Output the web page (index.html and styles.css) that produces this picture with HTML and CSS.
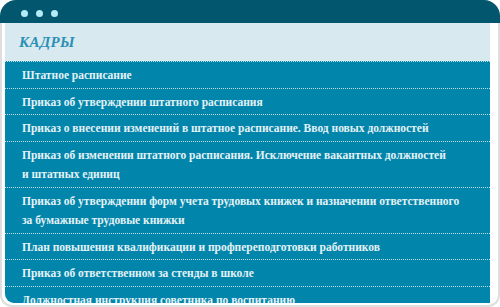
FILE: index.html
```html
<!DOCTYPE html>
<html lang="ru">
  <head>
    <meta charset="UTF-8" />
    <meta name="viewport" content="width=device-width, initial-scale=1" />
    <title>Кадры</title>
    <link rel="stylesheet" href="styles.css">
  </head>
  <body>
    <div class="window">
      <div class="titlebar">
        <span class="dot"></span>
        <span class="dot"></span>
        <span class="dot"></span>
      </div>
      <div class="frame">
        <section class="panel">
          <h2>КАДРЫ</h2>
          <ul class="docs">
            <li><a href="#">Штатное расписание</a></li>
            <li><a href="#">Приказ об утверждении штатного расписания</a></li>
            <li><a href="#">Приказ о внесении изменений в штатное расписание. Ввод новых должностей</a></li>
            <li><a href="#">Приказ об изменении штатного расписания. Исключение вакантных должностей<br>и штатных единиц</a></li>
            <li><a href="#">Приказ об утверждении форм учета трудовых книжек и назначении ответственного<br>за бумажные трудовые книжки</a></li>
            <li><a href="#">План повышения квалификации и профпереподготовки работников</a></li>
            <li><a href="#">Приказ об ответственном за стенды в школе</a></li>
            <li><a href="#">Должностная инструкция советника по воспитанию</a></li>
          </ul>
        </section>
      </div>
    </div>
  </body>
</html>
```

FILE: styles.css
```css
html,
body {
  margin: 0;
  padding: 0;
  background-color: #fff;
}

.window {
  width: 500px;
  height: 307px;
  display: flex;
  flex-direction: column;
  overflow: hidden;
}

.titlebar {
  height: 23px;
  flex: none;
  display: flex;
  align-items: center;
  gap: 8px;
  padding: 3px 0 0 21px;
  box-sizing: border-box;
  background-color: #02566d;
  border-radius: 16px 16px 0 0;
}

.dot {
  width: 7px;
  height: 7px;
  border-radius: 50%;
  background-color: #b3ecf8;
}

.frame {
  flex: 1;
  display: flex;
  min-height: 0;
  padding: 0 8px 2px 3px;
  border: 2px solid #dedede;
  border-top: none;
  border-radius: 0 0 12px 12px;
  background-color: #fff;
}

.panel {
  flex: 1;
  overflow: hidden;
  background-color: #0185aa;
  border-bottom-left-radius: 9px;
}

.panel h2 {
  margin: 0;
  height: 38px;
  padding: 0 14px;
  line-height: 39px;
  font-family: "Liberation Serif", serif;
  font-style: italic;
  font-weight: bold;
  font-size: 15px;
  letter-spacing: 0.3px;
  color: #2a90b6;
  background-color: #d9e9f0;
}

.docs {
  list-style: none;
  margin: 0;
  padding: 0;
  border-top: 1px dotted #bfe0ec;
  font-family: "Liberation Serif", serif;
  font-weight: bold;
  font-size: 11.5px;
}

.docs li {
  padding: 4px 17px 2px;
  line-height: 19.5px;
  border-bottom: 1px dotted #bfe0ec;
}

.docs a {
  color: #e4f2f7;
  text-decoration: none;
}
```
